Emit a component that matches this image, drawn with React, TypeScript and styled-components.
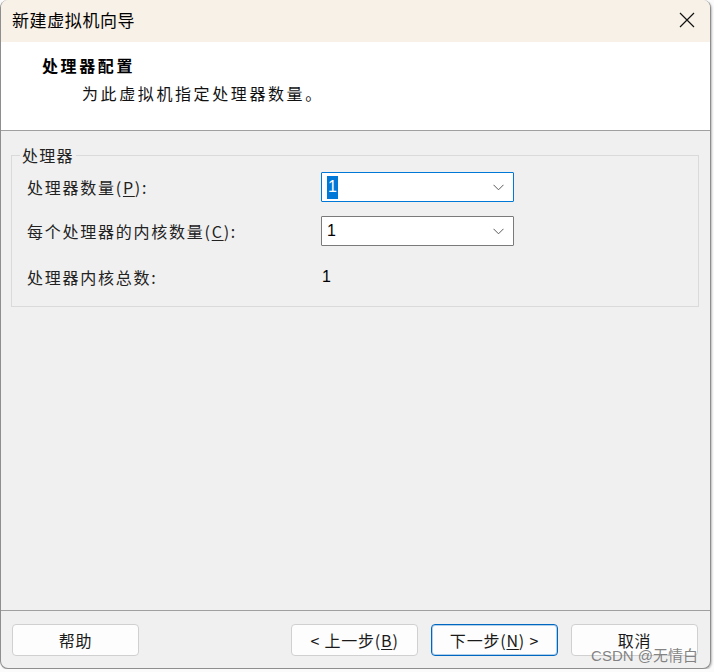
import styled, { createGlobalStyle, css } from 'styled-components';

const GlobalStyle = createGlobalStyle`
  html, body {
    margin: 0;
    padding: 0;
    background: #fbfbfb;
  }
  body {
    font-family: 'Noto Sans CJK SC', 'Liberation Sans', sans-serif;
    color: #1b1b1b;
  }
`;

const StWindow = styled.div`
  position: relative;
  width: 709px;
  height: 668px;
  display: flex;
  flex-direction: column;
  border: 1px solid #8e8e8e;
  border-top: none;
  border-radius: 8px;
  overflow: hidden;
  background: #f0f0f0;
  box-shadow: 1px 1px 2px rgba(0, 0, 0, 0.25);
`;

const StTitleBar = styled.div`
  height: 42px;
  flex-shrink: 0;
  display: flex;
  align-items: center;
  justify-content: space-between;
  padding: 0 15px 2px 11px;
  box-sizing: border-box;
  background: #f8f1e7;
`;

const StTitle = styled.span`
  font-size: 17px;
  letter-spacing: 0.6px;
  line-height: 22px;
  color: #000;
`;

const StClose = styled.button`
  display: flex;
  padding: 0;
  border: none;
  background: transparent;
`;

const StHeader = styled.div`
  height: 89px;
  flex-shrink: 0;
  box-sizing: border-box;
  padding: 12px 0 0 41px;
  background: #fff;
  border-bottom: 1px solid #a0a0a0;
`;

const StHeading = styled.div`
  font-size: 16px;
  font-weight: 700;
  letter-spacing: 2.6px;
  line-height: 22px;
  color: #000;
`;

const StSubHeading = styled.div`
  margin: 6px 0 0 40px;
  font-size: 16px;
  letter-spacing: 2.6px;
  line-height: 22px;
  color: #111;
`;

const StBody = styled.div`
  flex: 1;
  padding: 14px 11px 0 10px;
`;

const StGroup = styled.fieldset`
  margin: 0;
  padding: 7px 0 16px 15px;
  border: 1px solid #dadada;
  display: grid;
  grid-template-columns: 294px 193px;
  grid-auto-rows: 30px;
  row-gap: 14px;
  align-items: center;
`;

const StLegend = styled.legend`
  margin-left: -7px;
  padding: 0 2px;
  font-size: 16px;
  letter-spacing: 1.2px;
  line-height: 20px;
  color: #222;
`;

const StLabel = styled.span<{ $shift?: number }>`
  font-size: 16px;
  letter-spacing: 1.75px;
  line-height: 22px;
  color: #222;
  transform: translateY(${(p) => p.$shift ?? 0}px);
`;

const StValue = styled.span<{ $shift?: number }>`
  padding-left: 1px;
  font-family: 'Liberation Sans', sans-serif;
  font-size: 16px;
  color: #000;
  transform: translateY(${(p) => p.$shift ?? 0}px);
`;

const StCombo = styled.div<{ $focused?: boolean }>`
  height: 30px;
  box-sizing: border-box;
  display: flex;
  align-items: center;
  justify-content: space-between;
  padding: 0 9px 0 5px;
  background: #fff;
  border: 1px solid ${(p) => (p.$focused ? '#0078d7' : '#7a7a7a')};
  border-radius: 1px;
  font-family: 'Liberation Sans', sans-serif;
  font-size: 16px;
  color: #000;
`;

const StSelected = styled.span`
  padding: 1px 1px 2px;
  background: #0078d7;
  color: #fff;
  line-height: 20px;
`;

const StFooter = styled.div`
  position: relative;
  height: 58px;
  flex-shrink: 0;
  box-sizing: border-box;
  display: flex;
  align-items: flex-start;
  gap: 13px;
  padding: 13px 12px 0 11px;
  border-top: 1px solid #a0a0a0;
`;

const StButton = styled.button<{ $primary?: boolean; $pushRight?: boolean }>`
  width: 127px;
  height: 32px;
  padding: 0;
  font-family: inherit;
  font-size: 16px;
  letter-spacing: 0.8px;
  color: #1a1a1a;
  background: #fdfdfd;
  border: 1px solid #d0d0d0;
  border-radius: 4px;
  ${(p) => p.$pushRight && 'margin-left: auto;'}
  ${(p) =>
    p.$primary &&
    css`
      border-color: #0067c0;
      box-shadow: inset 0 0 0 1px rgba(0, 103, 192, 0.3);
    `}
`;

const StMnemonic = styled.span`
  text-decoration: underline;
  text-underline-offset: 2px;
`;

const StWatermark = styled.span`
  position: absolute;
  right: 12px;
  bottom: 3px;
  font-family: 'Liberation Sans', 'Noto Sans CJK SC', sans-serif;
  font-size: 15px;
  line-height: 18px;
  color: rgba(110, 110, 110, 0.85);
  pointer-events: none;
`;

function Chevron() {
  return (
    <svg width="11" height="7" viewBox="0 0 11 7">
      <polyline points="0.5,0.8 5.5,5.8 10.5,0.8" fill="none" stroke="#5a5a5a" strokeWidth="1" />
    </svg>
  );
}

function CloseIcon() {
  return (
    <svg width="16" height="16" viewBox="0 0 16 16">
      <path d="M1 1 L15 15 M15 1 L1 15" stroke="#111" strokeWidth="1.2" />
    </svg>
  );
}

export default function App() {
  return (
    <>
      <GlobalStyle />
      <StWindow>
        <StTitleBar>
          <StTitle>新建虚拟机向导</StTitle>
          <StClose aria-label="关闭">
            <CloseIcon />
          </StClose>
        </StTitleBar>

        <StHeader>
          <StHeading>处理器配置</StHeading>
          <StSubHeading>为此虚拟机指定处理器数量。</StSubHeading>
        </StHeader>

        <StBody>
          <StGroup>
            <StLegend>处理器</StLegend>

            <StLabel>
              处理器数量(<StMnemonic>P</StMnemonic>):
            </StLabel>
            <StCombo $focused>
              <StSelected>1</StSelected>
              <Chevron />
            </StCombo>

            <StLabel>
              每个处理器的内核数量(<StMnemonic>C</StMnemonic>):
            </StLabel>
            <StCombo>
              <span>1</span>
              <Chevron />
            </StCombo>

            <StLabel $shift={2}>处理器内核总数:</StLabel>
            <StValue $shift={2}>1</StValue>
          </StGroup>
        </StBody>

        <StFooter>
          <StButton>帮助</StButton>
          <StButton $pushRight>
            &lt; 上一步(<StMnemonic>B</StMnemonic>)
          </StButton>
          <StButton $primary>
            下一步(<StMnemonic>N</StMnemonic>) &gt;
          </StButton>
          <StButton>取消</StButton>
          <StWatermark>CSDN @无情白</StWatermark>
        </StFooter>
      </StWindow>
    </>
  );
}
